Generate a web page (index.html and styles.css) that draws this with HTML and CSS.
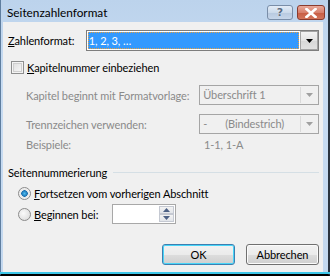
FILE: index.html
```html
<!DOCTYPE html>
<html>
<head>
<meta charset="utf-8">
<link rel="stylesheet" href="styles.css">
</head>
<body>
<div class="window">
  <div class="titlebar">
    <span class="title">Seitenzahlenformat</span>
    <div class="caption-btns">
      <div class="cbtn help">?</div>
      <div class="cbtn close">
        <svg width="12" height="10" viewBox="0 0 12 10"><path d="M1.5 1 L10.5 9 M10.5 1 L1.5 9" stroke="#fff" stroke-width="2.6" stroke-linecap="square"/></svg>
      </div>
    </div>
  </div>
  <div class="client">
    <div class="fmt-row">
      <span class="lbl"><u>Z</u>ahlenformat:</span>
      <div class="combo focus">
        <div class="combo-val"><span class="sel">1, 2, 3, …</span></div>
        <div class="dd"><svg width="7" height="4" viewBox="0 0 7 4"><path d="M0 0 H7 L3.5 4Z" fill="#000"/></svg></div>
      </div>
    </div>
    <div class="check-row">
      <span class="checkbox"></span>
      <span><u>K</u>apitelnummer einbeziehen</span>
    </div>
    <div class="chapter">
      <div class="crow">
        <span class="clbl">Kapitel beginnt mit Formatvorlage:</span>
        <div class="combo dis">
          <div class="combo-val">Überschrift 1</div>
          <div class="dd"><svg width="7" height="4" viewBox="0 0 7 4"><path d="M0 0 H7 L3.5 4Z" fill="#a0a0a0"/></svg></div>
        </div>
      </div>
      <div class="crow second">
        <span class="clbl">Trennzeichen verwenden:</span>
        <div class="combo dis">
          <div class="combo-val"><span class="dash">-</span>(Bindestrich)</div>
          <div class="dd"><svg width="7" height="4" viewBox="0 0 7 4"><path d="M0 0 H7 L3.5 4Z" fill="#a0a0a0"/></svg></div>
        </div>
      </div>
      <div class="crow ex">
        <span class="clbl">Beispiele:</span>
        <span class="exval">1-1, 1-A</span>
      </div>
    </div>
    <div class="group-head">
      <span>Seitennummerierung</span>
      <span class="gline"></span>
    </div>
    <div class="radio-row first">
      <span class="radio on"></span>
      <span><u>F</u>ortsetzen vom vorherigen Abschnitt</span>
    </div>
    <div class="radio-row second">
      <span class="radio"></span>
      <span class="rl"><u>B</u>eginnen bei:</span>
      <div class="spin">
        <div class="spin-val"></div>
        <div class="spin-btns">
          <div class="sb"><svg width="7" height="4" viewBox="0 0 7 4"><path d="M0 4 H7 L3.5 0Z" fill="#4d6185"/></svg></div>
          <div class="sb"><svg width="7" height="4" viewBox="0 0 7 4"><path d="M0 0 H7 L3.5 4Z" fill="#4d6185"/></svg></div>
        </div>
      </div>
    </div>
    <div class="buttons">
      <div class="btn default">OK</div>
      <div class="btn">Abbrechen</div>
    </div>
  </div>
</div>
</body>
</html>
```
FILE: styles.css
```css
* { box-sizing: border-box; }
html, body { margin: 0; padding: 0; }
body {
  width: 330px; height: 276px; overflow: hidden;
  font-family: "Lato", "Open Sans", sans-serif;
  font-size: 11px;
  letter-spacing: -0.1px;
  color: #000;
  white-space: nowrap;
}
.window {
  width: 330px; height: 276px;
  background: linear-gradient(#bcd3ec, #c8dcf2 30%, #c3d8ef);
  display: flex; flex-direction: column;
  border-left: 1px solid #5f7e9f;
  border-right: 2px solid #2a3440;
  border-bottom: 2px solid #000;
  position: relative;
}
.window::after {
  content: ""; position: absolute; left: -1px; right: -2px; bottom: 0; height: 2px;
  background: #3cc6e8;
}
.titlebar {
  height: 22px; flex: none;
  display: flex; align-items: flex-start;
  padding-left: 6px;
}
.title { font-size: 11.8px; line-height: 14px; margin-top: 6px; letter-spacing: 0; }
.caption-btns { margin-left: auto; margin-right: 3px; display: flex; gap: 4px; margin-top: 5px; }
.cbtn {
  height: 15px; border-radius: 3px;
  display: flex; align-items: center; justify-content: center;
}
.help {
  width: 26px;
  border: 1px solid #7a8ea8;
  background: linear-gradient(#e3ecf7, #cbdaeb 50%, #b7c9df 51%, #c6d6ea);
  color: #5a6b82; font-family: "DejaVu Sans", sans-serif; font-weight: bold; font-size: 11px;
  text-shadow: 0 0 1px #fff;
}
.close {
  width: 28px;
  border: 1px solid #8a3b2e;
  background: linear-gradient(#e9a99a, #d7806c 50%, #c75c43 51%, #d3765c);
}
.client {
  flex: 1; margin-left: 2px; margin-right: 5px;
  background: #f0f0f0;
  padding: 8px 4px 0 5px;
  display: flex; flex-direction: column;
}
.fmt-row { display: flex; align-items: center; height: 21px; flex: none; }
.lbl { width: 78px; }
.combo {
  display: flex; height: 21px;
  border: 1px solid #a5a5a5;
}
.focus { width: 234px; border-color: #7d7d7d; background: #fff; }
.focus .combo-val { flex: 1; padding: 1px; }
.sel {
  display: block; height: 100%;
  background: #3399ff; color: #fff;
  outline: 1px dotted #e8a040; outline-offset: -1px;
  padding-left: 1px; line-height: 17px;
}
.dd {
  width: 18px; display: flex; align-items: center; justify-content: center;
  border: 1px solid #a3a3a3;
  background: linear-gradient(#f2f2f2, #e3e3e3 50%, #d7d7d7 51%, #e1e1e1);
}
.check-row { display: flex; align-items: center; margin-top: 9px; height: 14px; flex: none; }
.checkbox, .radio {
  width: 13px; height: 13px; flex: none;
  border: 1px solid #8e8f8f;
  background: linear-gradient(135deg, #dcdcdc, #fbfbfb);
  box-shadow: inset 0 0 0 1px #f4f4f4, inset 0 0 0 2px #cfcfcf;
  margin-left: 3px; margin-right: 3px;
}
.chapter { padding-left: 18px; color: #8a8a8a; margin-top: 11px; display: flex; flex-direction: column; flex: none; }
.crow { display: flex; align-items: center; height: 20px; }
.crow.second { margin-top: 9px; }
.clbl { width: 175px; }
.dis { width: 121px; height: 20px; }
.dis .combo-val { flex: 1; padding-left: 3px; line-height: 18px; }
.dis .dd { border: none; border-left: 1px solid #dadada; margin: 1px; width: 17px; background: #f0f0f0; }
.dash { display: inline-block; width: 22px; }
.ex { margin-top: 3px; height: 14px; }
.exval { padding-left: 3px; }
.group-head { display: flex; align-items: center; margin-top: 14px; height: 14px; flex: none; }
.gline { flex: 1; height: 1px; background: #d5dfe5; margin-left: 6px; margin-right: 0; }
.radio-row { display: flex; align-items: center; padding-left: 7px; flex: none; }
.radio-row.first { margin-top: 7px; height: 14px; }
.radio-row.second { margin-top: 1px; height: 26px; }
.radio {
  border-radius: 50%;
  background: radial-gradient(circle at 40% 40%, #fafafa, #d6d6d6);
  box-shadow: none;
  border-color: #8b8b8b;
}
.radio.on {
  background: radial-gradient(circle at 50% 50%, #4fbff2 0, #1a6fb0 3px, #e6e6e6 3.5px, #f5f5f5 6px);
}
.rl { width: 78px; }
.spin {
  width: 64px; height: 20px; display: flex;
  border: 1px solid #a8a8a8; background: #fff;
}
.spin-val { flex: 1; }
.spin-btns { width: 15px; display: flex; flex-direction: column; margin: 1px; gap: 0; }
.sb {
  flex: 1; display: flex; align-items: center; justify-content: center;
  border: 1px solid #c5c9d2;
  background: linear-gradient(#f3f3f3, #e2e5ea);
}
.buttons { display: flex; justify-content: flex-end; gap: 11px; margin-top: auto; margin-bottom: 9px; padding-right: 0; flex: none; }
.btn {
  width: 73px; height: 21px; border-radius: 3px;
  border: 1px solid #707070;
  background: linear-gradient(#f2f2f2, #ebebeb 50%, #dddddd 51%, #cfcfcf);
  box-shadow: inset 0 0 0 1px #fbfbfb;
  display: flex; align-items: center; justify-content: center;
}
.btn.default { border-color: #3c7fb1; box-shadow: inset 0 0 0 1px #48d5f8; }
u { text-decoration: underline; text-underline-offset: 1px; }
```
